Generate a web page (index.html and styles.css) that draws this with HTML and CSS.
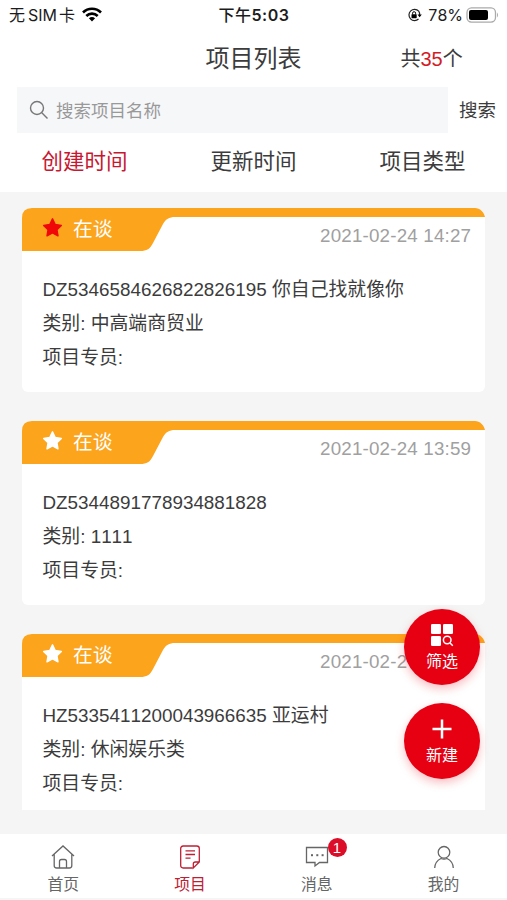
FILE: index.html
```html
<!DOCTYPE html>
<html lang="zh-CN">
<head>
<meta charset="utf-8">
<title>项目列表</title>
<link rel="stylesheet" href="styles.css">
</head>
<body>
<svg class="defs" aria-hidden="true">
  <symbol id="ribbon" viewBox="0 0 463 43">
    <path d="M0 43V10Q0 0 10 0H453C458 0 462 4 463 9H153C147 9 144 11 141 16L131 35C128 41 125 43 118 43Z" fill="#fca41c"/>
  </symbol>
  <symbol id="star" viewBox="0 0 20 20">
    <path d="M10 1.8L12.6 7.1L18.4 8L14.2 12.1L15.2 17.9L10 15.2L4.8 17.9L5.8 12.1L1.6 8L7.4 7.1Z" fill="currentColor" stroke="currentColor" stroke-width="1.4" stroke-linejoin="round"/>
  </symbol>
</svg>
<div class="app">
  <div class="status">
    <div class="carrier"><span>无</span><span class="sim">SIM</span><span>卡</span>
      <svg class="wifi" width="20" height="15" viewBox="0 0 20 15"><g fill="none" stroke="#000" stroke-width="2.6"><path d="M1 5.5C6 .5 14 .5 19 5.5"/><path d="M4.3 9C7.5 5.8 12.500 5.8 15.700 9"/></g><path d="M6.900 11.300Q10 8.800 13.100 11.300L10 14.500Z"/></svg>
    </div>
    <div class="clock">下午<b>5:03</b></div>
    <div class="power">
      <svg width="15" height="14" viewBox="0 0 15 14"><path d="M11.700 3.200A5.600 5.600 0 1 0 11.500 11M11.700 3.200A5.600 5.600 0 0 1 12.600 7" fill="none" stroke="#222" stroke-width="1.200"/><path d="M10.500 6.400H14.800L12.600 9.200Z"/><rect x="4.500" y="6.200" width="5.200" height="4" rx=".6"/><path d="M5.600 6.500V5.200a1.500 1.500 0 0 1 3 0V6.500" fill="none" stroke="#000"/></svg>
      <span>78%</span>
      <svg width="33" height="16" viewBox="0 0 33 16"><rect x="1" y=".9" width="28.500" height="14.200" rx="4.500" fill="#fff" stroke="#aaa" stroke-width="1.300"/><rect x="3" y="3" width="19" height="10" rx="2"/><path d="M31 5.500Q33 8 31 10.500Z" fill="#aaa"/></svg>
    </div>
  </div>
  <header class="header"><span></span><h1>项目列表</h1><div class="count">共<em>35</em>个</div></header>
  <div class="search">
    <div class="field">
      <svg width="20" height="20" viewBox="0 0 20 20" fill="none" stroke="#777" stroke-width="1.400"><circle cx="8" cy="8" r="6.500"/><path d="M12.800 12.800L18.500 18.500"/></svg>
      <span>搜索项目名称</span>
    </div>
    <span class="go">搜索</span>
  </div>
  <nav class="sorts"><span class="active">创建时间</span><span>更新时间</span><span>项目类型</span></nav>

  <main class="list">
    <article class="card">
      <svg class="ribbon"><use href="#ribbon"/></svg>
      <div class="top"><svg class="star red"><use href="#star"/></svg><span class="state">在谈</span><time>2021-02-24 14:27</time></div>
      <div class="info"><p>DZ5346584626822826195 你自己找就像你</p><p>类别: 中高端商贸业</p><p>项目专员:</p></div>
    </article>
    <article class="card">
      <svg class="ribbon"><use href="#ribbon"/></svg>
      <div class="top"><svg class="star"><use href="#star"/></svg><span class="state">在谈</span><time>2021-02-24 13:59</time></div>
      <div class="info"><p>DZ5344891778934881828</p><p>类别: 1111</p><p>项目专员:</p></div>
    </article>
    <article class="card last">
      <svg class="ribbon"><use href="#ribbon"/></svg>
      <div class="top"><svg class="star"><use href="#star"/></svg><span class="state">在谈</span><time class="clipped">2021-02-2</time></div>
      <div class="info"><p>HZ5335411200043966635 亚运村</p><p>类别: 休闲娱乐类</p><p>项目专员:</p></div>
    </article>
  </main>

  <div class="fabs">
    <div class="fab">
      <svg width="24" height="24" viewBox="0 0 24 24"><g fill="#fff"><rect x="1" y="1" width="10" height="10" rx="1.300"/><rect x="13" y="1" width="10" height="10" rx="1.300"/><rect x="1" y="13" width="10" height="10" rx="1.300"/></g><g fill="none" stroke="#fff" stroke-width="1.500"><circle cx="17.200" cy="17" r="3.800"/><path d="M20 20L22.800 22.800"/></g></svg>
      <span>筛选</span>
    </div>
    <div class="fab">
      <svg width="24" height="24" viewBox="0 0 24 24"><path d="M12 2.500V21.500M2.500 12H21.500" stroke="#fff" stroke-width="2.500"/></svg>
      <span>新建</span>
    </div>
  </div>

  <footer class="tabs">
    <div class="tab">
      <svg width="26" height="26" viewBox="0 0 26 26"><path d="M2 12L13 2L24 12M4.200 10.500V21.500Q4.200 24 6.700 24H19.300Q21.800 24 21.800 21.500V10.500M9.500 24V17.500Q9.500 15.500 11.500 15.500H14.500Q16.500 15.500 16.500 17.500V24"/></svg>
      <span>首页</span>
    </div>
    <div class="tab active">
      <svg width="26" height="26" viewBox="0 0 26 26"><path d="M15.500 24H6.200Q3.700 24 3.700 21.500V4.500Q3.700 2 6.200 2H19.800Q22.300 2 22.300 4.500V18L16.300 24V20Q16.300 18 18.300 18H22.300M8.500 6.800H18M8.500 10.500H18M8.500 14.200H13.500"/></svg>
      <span>项目</span>
    </div>
    <div class="tab">
      <svg width="26" height="26" viewBox="0 0 26 26"><path d="M2.500 3.500H23.500V18.500H15.500L11 22V18.500H2.500Z"/><g fill="#666" stroke="none"><rect x="7" y="10.200" width="2" height="2"/><rect x="12.300" y="10.200" width="2" height="2"/><rect x="17.600" y="10.200" width="2" height="2"/></g></svg>
      <span>消息</span>
      <i class="badge">1</i>
    </div>
    <div class="tab">
      <svg width="26" height="26" viewBox="0 0 26 26"><circle cx="13" cy="8.300" r="5.800"/><path d="M3.700 24C3.900 19 6.300 16.300 10 14.500C11.800 15.200 14.200 15.200 16 14.500C19.700 16.300 22.100 19 22.300 24"/></svg>
      <span>我的</span>
    </div>
  </footer>
</div>
</body>
</html>
```
FILE: styles.css
```css
* { box-sizing: border-box; }
body {
  margin: 0;
  font-family: "Liberation Sans", "Noto Sans CJK SC", sans-serif;
  font-kerning: none;
  color: #3c3c3c;
  background: #fff;
}
svg { display: block; flex: none; }
.defs { position: absolute; width: 0; height: 0; }
.app {
  position: relative;
  width: 507px;
  height: 900px;
  display: flex;
  flex-direction: column;
  overflow: hidden;
}
.status {
  height: 30px;
  flex: none;
  display: grid;
  grid-template-columns: 1fr auto 1fr;
  align-items: center;
  padding: 0 8px 1px 9px;
  font-family: Inter, "Noto Sans CJK SC", sans-serif;
  font-size: 16px;
  line-height: 28px;
  color: #1c1c1c;
}
.carrier { display: flex; align-items: center; }
.sim { margin: 0 2px 0 3px; }
.wifi { margin-left: 7px; }
.clock { font-weight: 500; letter-spacing: 0.5px; }
.clock b { font-weight: 600; }
.power { display: flex; align-items: center; justify-content: flex-end; }
.power span { margin: 0 3px 0 6px; }
.header {
  height: 57px;
  flex: none;
  display: grid;
  grid-template-columns: 1fr auto 1fr;
  align-items: center;
}
h1 { margin: 0; font-size: 24px; font-weight: 400; line-height: 57px; }
.count { padding-left: 99px; font-size: 20px; line-height: 54px; }
.count em { font-style: normal; color: #d31b26; }
.search { height: 46px; flex: none; display: flex; align-items: center; padding-left: 17px; }
.field {
  width: 431px;
  height: 46px;
  display: flex;
  align-items: center;
  gap: 7px;
  padding-left: 12px;
  background: #f6f7f9;
  font-size: 17.500px;
  color: #999;
}
.field span, .go { margin-top: -2px; }
.go { margin-left: 11px; font-size: 18.500px; }
.sorts {
  height: 59px;
  flex: none;
  display: grid;
  grid-template-columns: repeat(3, 1fr);
  text-align: center;
  font-size: 21.500px;
  line-height: 59px;
}
.sorts .active { color: #c71831; }
.list {
  flex: 1;
  display: flex;
  flex-direction: column;
  gap: 29px;
  padding: 16px 22px 0;
  background: #f5f5f5;
}
.card {
  position: relative;
  height: 184px;
  flex: none;
  border-radius: 10px 10px 6px 6px;
  background: #fff;
}
.card.last { height: 176px; border-radius: 10px 10px 0 0; }
.ribbon { position: absolute; left: 0; top: 0; width: 463px; height: 43px; }
.top { position: relative; height: 43px; display: flex; align-items: center; padding: 0 13px 0 20px; }
.star { width: 21px; height: 21px; margin-top: -4px; color: #fff; }
.star.red { color: #f00808; }
.state { margin-left: 10px; color: #fff; font-size: 19.800px; line-height: 45px; }
time { width: 152px; margin: 12px 0 0 auto; color: #a0a0a0; font-size: 18.750px; letter-spacing: 0.2px; white-space: nowrap; }
.info { padding: 22px 20px 0 20.500px; }
.info p { margin: 0; font-size: 18.850px; line-height: 33.750px; white-space: nowrap; }
.fabs { position: absolute; left: 404px; top: 609px; display: grid; gap: 18px; }
.fab {
  width: 76px;
  height: 76px;
  border-radius: 50%;
  background: #e60012;
  box-shadow: 0 4px 10px rgba(230, 0, 18, 0.25);
  color: #fff;
  display: flex;
  flex-direction: column;
  align-items: center;
  padding-top: 14px;
  font-size: 16px;
}
.fab span { line-height: 24px; margin-top: 3px; }
.tabs {
  height: 66px;
  flex: none;
  display: grid;
  grid-template-columns: repeat(4, 1fr);
  background: #fff;
  border-bottom: 2px solid #f5f5f5;
}
.tab {
  position: relative;
  display: flex;
  flex-direction: column;
  align-items: center;
  padding-top: 10px;
  font-size: 15.800px;
  color: #666;
}
.tab svg { fill: none; stroke: currentColor; stroke-width: 1.300; }
.tab span { line-height: 24px; margin-top: 3px; }
.tab.active { color: #bd2034; }
.badge {
  position: absolute;
  left: 74px;
  top: 4px;
  width: 19px;
  height: 19px;
  border-radius: 50%;
  background: #dc0d28;
  color: #fff;
  font-size: 15px;
  font-style: normal;
  line-height: 19px;
  text-align: center;
}
```
